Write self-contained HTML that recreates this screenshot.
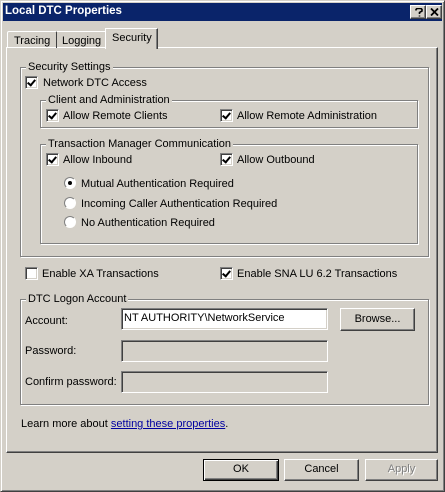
<!DOCTYPE html>
<html><head><style>
*{margin:0;padding:0;box-sizing:border-box}
body{width:445px;height:492px;background:#d4d0c8;position:relative;overflow:hidden;font:11px "Liberation Sans",sans-serif;color:#000}
.a{position:absolute}
.t{position:absolute;white-space:nowrap;line-height:13px}
.cb{position:absolute;width:13px;height:13px;background:#fff;border:1px solid;border-color:#808080 #fff #fff #808080;box-shadow:inset 1px 1px 0 #404040,inset -1px -1px 0 #d4d0c8}
.cb.c::after{content:"";position:absolute;left:3px;top:1px;width:3px;height:6px;border:solid #000;border-width:0 2px 2px 0;transform:rotate(40deg)}
.rd{position:absolute;width:12px;height:12px;border-radius:50%;background:#fff;border:1px solid;border-color:#808080 #fff #fff #808080}
.rd.c::after{content:"";position:absolute;left:3px;top:3px;width:4px;height:4px;border-radius:50%;background:#000}
.g{position:absolute;border:1px solid #808080;box-shadow:1px 1px 0 #fff,inset 1px 1px 0 #fff}
.gl{position:absolute;background:#d4d0c8;padding:0 2px;line-height:13px;white-space:nowrap}
.in{position:absolute;border:1px solid;border-color:#808080 #fff #fff #808080;box-shadow:inset 1px 1px 0 #404040,inset -1px -1px 0 #d4d0c8;background:#d4d0c8}
.btn{position:absolute;border:1px solid;border-color:#fff #404040 #404040 #fff;box-shadow:inset -1px -1px 0 #808080;text-align:center;line-height:19px;background:#d4d0c8}
</style></head><body>
<div class="a" style="left:0;top:0;width:445px;height:492px;border:1px solid;border-color:#d4d0c8 #404040 #404040 #d4d0c8;box-shadow:inset 1px 1px 0 #fff,inset -1px -1px 0 #808080"></div>
<div class="a" style="left:3px;top:3px;width:439px;height:18px;background:#0a246a"></div>
<div class="t" style="left:5px;top:5px;color:#fff;font-weight:bold;font-size:11.5px">Local DTC Properties</div>
<div class="btn" style="left:410px;top:5px;width:16px;height:14px"><svg class="a" style="left:4px;top:2px" width="8" height="9" viewBox="0 0 8 9"><path d="M1 2.5V1.5L2 0.5H6L7 1.5V3L4.5 4.5V6M4.5 7.5V8.5" stroke="#000" stroke-width="1.6" fill="none"/></svg></div>
<div class="btn" style="left:426px;top:5px;width:16px;height:14px"><svg class="a" style="left:3px;top:2px" width="9" height="8" viewBox="0 0 9 8"><path d="M1 0.5L8 7.5M8 0.5L1 7.5" stroke="#000" stroke-width="1.8" fill="none"/></svg></div>
<!-- panel -->
<div class="a" style="left:6px;top:47px;width:432px;height:406px;border:1px solid;border-color:#fff #404040 #404040 #fff;box-shadow:inset -1px -1px 0 #808080"></div>
<!-- tabs -->
<div class="a" style="left:7px;top:31px;width:50px;height:17px;border:1px solid #fff;border-bottom:none;border-right:1px solid #404040;border-radius:2px 2px 0 0"></div>
<div class="t" style="left:14px;top:35px">Tracing</div>
<div class="a" style="left:57px;top:31px;width:49px;height:17px;border-top:1px solid #fff;border-right:1px solid #404040;"></div>
<div class="t" style="left:62px;top:35px">Logging</div>
<div class="a" style="left:105px;top:28px;width:53px;height:21px;background:#d4d0c8;border:1px solid #fff;border-bottom:none;border-right:1px solid #404040;box-shadow:inset -1px 0 0 #808080"></div>
<div class="t" style="left:112px;top:32px">Security</div>
<!-- security settings -->
<div class="g" style="left:20px;top:67px;width:409px;height:190px"></div>
<div class="gl" style="left:26px;top:61px">Security Settings</div>
<div class="cb c" style="left:25px;top:76px"></div><div class="t" style="left:43px;top:77px">Network DTC Access</div>
<div class="g" style="left:40px;top:100px;width:378px;height:28px"></div>
<div class="gl" style="left:46px;top:94px">Client and Administration</div>
<div class="cb c" style="left:46px;top:109px"></div><div class="t" style="left:63px;top:110px">Allow Remote Clients</div>
<div class="cb c" style="left:220px;top:109px"></div><div class="t" style="left:237px;top:110px">Allow Remote Administration</div>
<div class="g" style="left:40px;top:144px;width:378px;height:100px"></div>
<div class="gl" style="left:46px;top:138px">Transaction Manager Communication</div>
<div class="cb c" style="left:46px;top:153px"></div><div class="t" style="left:63px;top:154px">Allow Inbound</div>
<div class="cb c" style="left:220px;top:153px"></div><div class="t" style="left:237px;top:154px">Allow Outbound</div>
<div class="rd c" style="left:64px;top:177px"></div><div class="t" style="left:81px;top:178px">Mutual Authentication Required</div>
<div class="rd" style="left:64px;top:197px"></div><div class="t" style="left:81px;top:198px">Incoming Caller Authentication Required</div>
<div class="rd" style="left:64px;top:216px"></div><div class="t" style="left:81px;top:217px">No Authentication Required</div>
<div class="cb" style="left:25px;top:267px"></div><div class="t" style="left:42px;top:268px">Enable XA Transactions</div>
<div class="cb c" style="left:220px;top:267px"></div><div class="t" style="left:237px;top:268px">Enable SNA LU 6.2 Transactions</div>
<!-- logon -->
<div class="g" style="left:20px;top:299px;width:409px;height:106px"></div>
<div class="gl" style="left:26px;top:293px">DTC Logon Account</div>
<div class="t" style="left:25px;top:315px">Account:</div>
<div class="in" style="left:121px;top:308px;width:207px;height:22px;background:#fff"></div>
<div class="t" style="left:124px;top:312px">NT AUTHORITY\NetworkService</div>
<div class="btn" style="left:340px;top:308px;width:75px;height:23px;line-height:21px">Browse...</div>
<div class="t" style="left:25px;top:345px">Password:</div>
<div class="in" style="left:121px;top:340px;width:207px;height:22px"></div>
<div class="t" style="left:25px;top:376px">Confirm password:</div>
<div class="in" style="left:121px;top:371px;width:207px;height:22px"></div>
<div class="t" style="left:21px;top:418px">Learn more about <span style="color:#0000a0;text-decoration:underline">setting these properties</span>.</div>
<!-- buttons -->
<div class="btn" style="left:203px;top:459px;width:76px;height:22px;border:1px solid #000;box-shadow:inset 1px 1px 0 #fff,inset -1px -1px 0 #404040,inset -2px -2px 0 #808080">OK</div>
<div class="btn" style="left:284px;top:459px;width:75px;height:22px">Cancel</div>
<div class="btn" style="left:365px;top:459px;width:73px;height:22px;color:#808080;text-shadow:1px 1px 0 #fff">Apply</div>
</body></html>
